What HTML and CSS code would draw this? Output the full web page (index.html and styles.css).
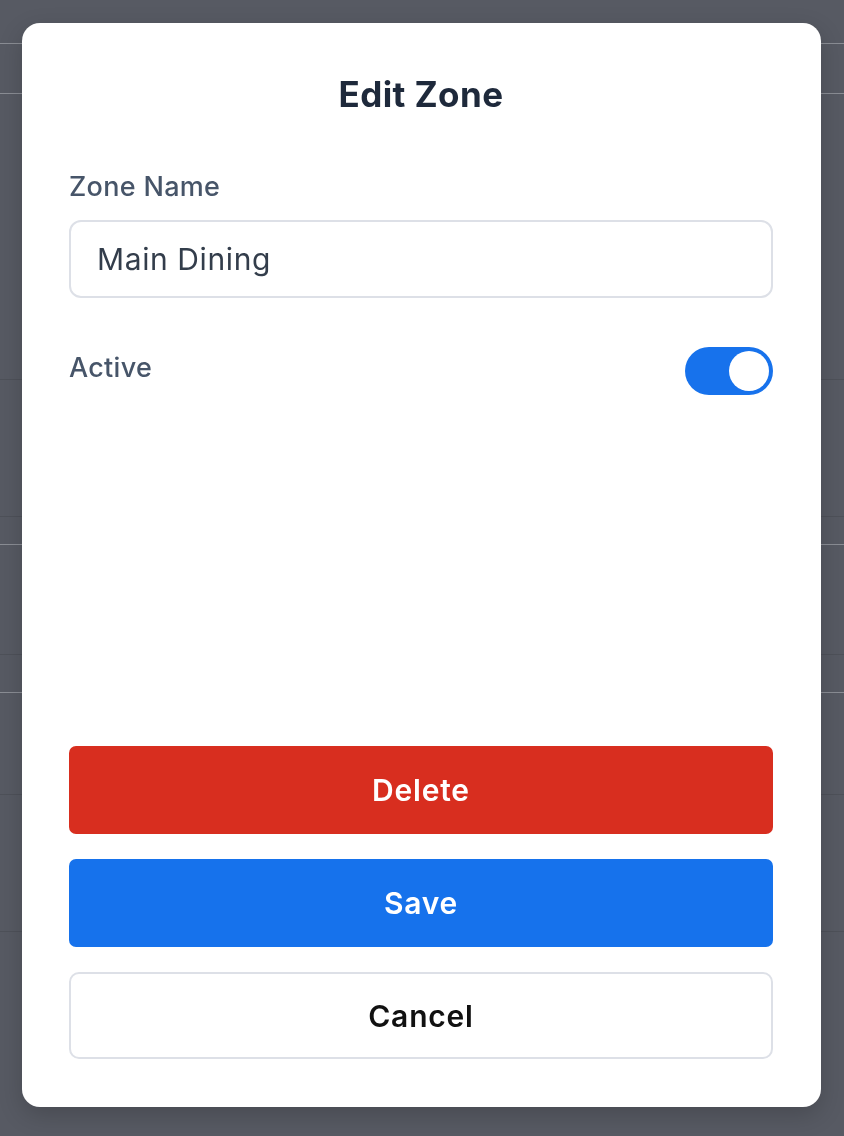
FILE: index.html
```html
<!DOCTYPE html>
<html lang="en">
<head>
    <meta charset="UTF-8">
    <meta name="viewport" content="width=device-width, initial-scale=1.0">
    <title>Zones</title>
    <link rel="stylesheet" href="styles.css">
</head>
<body>
    <!-- Page behind the dialog -->
    <main class="page">
        <div class="row row-light" style="height: 44px;"></div>
        <div class="row row-light" style="height: 50px;"></div>
        <div class="row row-dark" style="height: 286px;"></div>
        <div class="row row-dark" style="height: 137px;"></div>
        <div class="row row-light" style="height: 28px;"></div>
        <div class="row row-dark" style="height: 110px;"></div>
        <div class="row row-light" style="height: 38px;"></div>
        <div class="row row-dark" style="height: 102px;"></div>
        <div class="row row-dark" style="height: 137px;"></div>
    </main>

    <!-- Edit zone dialog -->
    <div class="overlay">
        <section class="modal">
            <h2 class="modal-title">Edit Zone</h2>

            <div class="field">
                <label class="field-label" for="zoneName">Zone Name</label>
                <input class="text-input" type="text" id="zoneName" value="Main Dining">
            </div>

            <div class="toggle-row">
                <span class="field-label">Active</span>
                <span class="switch" role="switch" aria-checked="true"><span class="knob"></span></span>
            </div>

            <div class="actions">
                <button class="btn btn-delete">Delete</button>
                <button class="btn btn-save">Save</button>
                <button class="btn btn-cancel">Cancel</button>
            </div>
        </section>
    </div>
</body>
</html>
```

FILE: styles.css
```css
/* Base */
body {
    margin: 0;
    background-color: #575a63;
    font-family: Inter, "Noto Sans", sans-serif;
}

/* Page dimmed behind the dialog */
.page {
    height: 1136px;
    overflow: hidden;
}

.row {
    box-sizing: border-box;
}

.row-light {
    border-bottom: 1px solid #8a8d94;
}

.row-dark {
    border-bottom: 1px solid #4e5159;
}

/* Dialog */
.overlay {
    position: fixed;
    inset: 0;
    padding: 23px 23px 29px 22px;
    display: flex;
}

.modal {
    flex: 1;
    display: flex;
    flex-direction: column;
    background: #fff;
    border-radius: 18px;
    padding: 48px 48px 48px 47px;
    box-shadow: 0 8px 24px rgba(0, 0, 0, 0.18);
}

.modal-title {
    margin: 0;
    text-align: center;
    font-size: 35px;
    line-height: 46px;
    font-weight: 700;
    letter-spacing: 0.4px;
    color: #1e293b;
}

.field {
    display: flex;
    flex-direction: column;
    gap: 17px;
    margin-top: 54px;
}

.field-label {
    font-size: 27px;
    line-height: 32px;
    font-weight: 500;
    letter-spacing: 0.3px;
    color: #475569;
}

.text-input {
    height: 78px;
    box-sizing: border-box;
    padding: 0 26px;
    border: 2px solid #dde0e7;
    border-radius: 12px;
    font-family: inherit;
    font-size: 30px;
    letter-spacing: 0.6px;
    color: #333d4b;
    outline: none;
}

.toggle-row {
    display: flex;
    justify-content: space-between;
    align-items: flex-start;
    margin-top: 49px;
}

.toggle-row .field-label {
    line-height: 42px;
}

.switch {
    width: 88px;
    height: 48px;
    box-sizing: border-box;
    padding: 4px;
    border-radius: 24px;
    background-color: #1772ec;
    display: flex;
    justify-content: flex-end;
}

.knob {
    width: 40px;
    height: 40px;
    border-radius: 50%;
    background: #fff;
}

/* Buttons */
.actions {
    margin-top: auto;
    display: flex;
    flex-direction: column;
    gap: 25px;
}

.btn {
    height: 88px;
    border: none;
    border-radius: 7px;
    font-family: inherit;
    font-size: 30px;
    font-weight: 600;
    letter-spacing: 0.8px;
    cursor: pointer;
}

.btn-delete {
    background-color: #d82e1f;
    color: #fff;
}

.btn-save {
    background-color: #1672ec;
    color: #fff;
}

.btn-cancel {
    height: 87px;
    background: #fff;
    border: 2px solid #dde0e7;
    border-radius: 10px;
    color: #111;
}
```
